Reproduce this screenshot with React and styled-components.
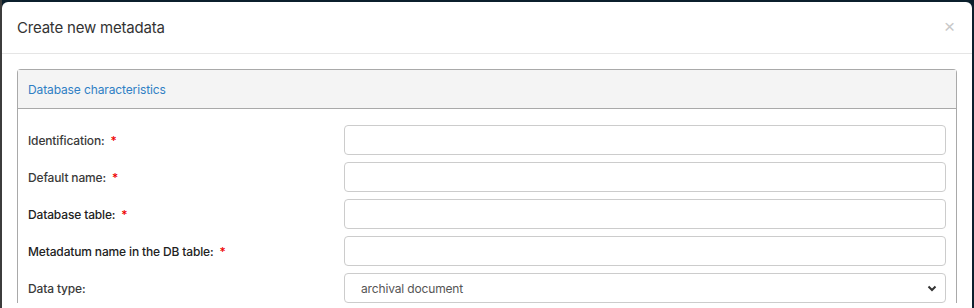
import styled, { createGlobalStyle } from "styled-components";

const GlobalStyle = createGlobalStyle`
  html, body {
    margin: 0;
    padding: 0;
    background: #0b1f2c;
    overflow: hidden;
  }
  * {
    box-sizing: border-box;
  }
`;

const Backdrop = styled.div`
  height: 308px;
  padding: 2px 2px 0 0;
  border-left: 2px solid #3c3c3c;
  background: #0b1f2c;
`;

const Modal = styled.div`
  height: 100%;
  background: #fff;
  border-radius: 6px 6px 0 0;
  font-family: "Inter", "Liberation Sans", sans-serif;
  color: #333;
  overflow: hidden;
`;

const ModalHeader = styled.div`
  display: flex;
  align-items: center;
  justify-content: space-between;
  height: 52px;
  padding: 0 15px;
  border-bottom: 1px solid #e5e5e5;
`;

const Title = styled.h4`
  margin: 0;
  font-size: 15px;
  font-weight: 400;
  letter-spacing: -0.2px;
  color: #333;
`;

const Close = styled.button`
  border: 0;
  background: none;
  padding: 0;
  margin: 0 2px 2px 0;
  font-size: 19px;
  line-height: 1;
  color: #c8c8c8;
  font-family: "Liberation Sans", sans-serif;
`;

const ModalBody = styled.div`
  padding: 15px;
`;

const Panel = styled.div`
  border: 1px solid #a9a9a9;
  border-bottom: 0;
  border-radius: 4px 4px 0 0;
`;

const PanelHeading = styled.div`
  height: 39px;
  display: flex;
  align-items: center;
  padding: 0 10px;
  background: #f4f4f4;
  border-bottom: 1px solid #a9a9a9;
  color: #2f7fc4;
  font-size: 12px;
  letter-spacing: -0.12px;
`;

const PanelBody = styled.div`
  padding: 16px 10px 0;
  display: flex;
  flex-direction: column;
  gap: 7px;
`;

const Row = styled.div`
  display: grid;
  grid-template-columns: 316px 1fr;
  align-items: center;
`;

const Label = styled.label`
  font-size: 12px;
  font-weight: 500;
  letter-spacing: -0.15px;
  color: ${(p) => (p.$dark ? "#222" : "#3a3a3a")};
`;

const Required = styled.span`
  color: #e00;
  margin-left: 6px;
`;

const Input = styled.input`
  height: 30px;
  width: 100%;
  border: 1px solid #ccc;
  border-radius: 4px;
  padding: 0 12px;
  font-family: inherit;
  font-size: 12px;
`;

const SelectBox = styled.div`
  height: 30px;
  border: 1px solid #ccc;
  border-radius: 4px;
  display: flex;
  align-items: center;
  justify-content: space-between;
  padding: 0 8px 0 16px;
  font-size: 12px;
  letter-spacing: -0.15px;
  color: #555;
`;

const fields = [
  { label: "Identification:", required: true },
  { label: "Default name:", required: true },
  { label: "Database table:", required: true, dark: true },
  { label: "Metadatum name in the DB table:", required: true, dark: true },
];

export default function App() {
  return (
    <>
      <GlobalStyle />
      <Backdrop>
        <Modal>
          <ModalHeader>
            <Title>Create new metadata</Title>
            <Close>×</Close>
          </ModalHeader>
          <ModalBody>
            <Panel>
              <PanelHeading>Database characteristics</PanelHeading>
              <PanelBody>
                {fields.map((f) => (
                  <Row key={f.label}>
                    <Label $dark={f.dark}>
                      {f.label}
                      {f.required && <Required>*</Required>}
                    </Label>
                    <Input type="text" />
                  </Row>
                ))}
                <Row>
                  <Label>Data type:</Label>
                  <SelectBox>
                    archival document
                    <svg width="10" height="7" viewBox="0 0 10 7">
                      <path
                        d="M1.5 1.5 L5 5 L8.5 1.5"
                        fill="none"
                        stroke="#333"
                        strokeWidth="2"
                      />
                    </svg>
                  </SelectBox>
                </Row>
              </PanelBody>
            </Panel>
          </ModalBody>
        </Modal>
      </Backdrop>
    </>
  );
}
